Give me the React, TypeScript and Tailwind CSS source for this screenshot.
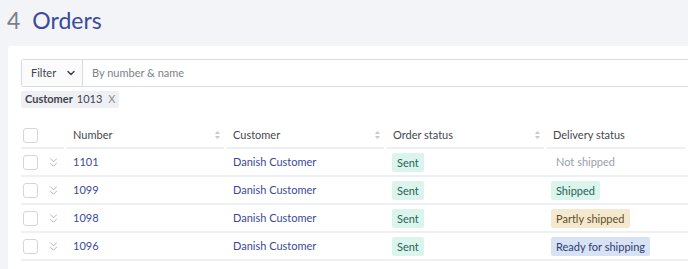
import React from 'react'
import { ChevronDown, ChevronsDown } from 'lucide-react'

interface Order {
  number: string
  customer: string
  orderStatus: string
  delivery: 'none' | 'shipped' | 'partly' | 'ready'
}

const orders: Order[] = [
  { number: '1101', customer: 'Danish Customer', orderStatus: 'Sent', delivery: 'none' },
  { number: '1099', customer: 'Danish Customer', orderStatus: 'Sent', delivery: 'shipped' },
  { number: '1098', customer: 'Danish Customer', orderStatus: 'Sent', delivery: 'partly' },
  { number: '1096', customer: 'Danish Customer', orderStatus: 'Sent', delivery: 'ready' }
]

const SortIcon = () => (
  <svg width="7" height="10" viewBox="0 0 7 10" className="shrink-0">
    <path d="M3.5 1 L6 4 H1 Z" fill="#c4c7cf" />
    <path d="M3.5 9 L6 6 H1 Z" fill="#c4c7cf" />
  </svg>
)

const Checkbox = () => (
  <div className="w-[15px] h-[15px] rounded-[3px] border border-[#d4d6dc] bg-white" />
)

const badge = 'px-[5px] py-[3px] leading-[13px] rounded-[2px]'

const DeliveryCell = ({ status }: { status: Order['delivery'] }) => {
  if (status === 'none') return <span className="px-[5px] text-[#9ba0aa]">Not shipped</span>
  if (status === 'shipped') return <span className={`${badge} bg-[#dcf5ec] text-[#27645a]`}>Shipped</span>
  if (status === 'partly') return <span className={`${badge} bg-[#f4e9cf] text-[#5e4d27]`}>Partly shipped</span>
  return <span className={`${badge} bg-[#d7e2f4] text-[#2f3d6e]`}>Ready for shipping</span>
}

const HeaderCell = ({ label, sortable = true }: { label: string; sortable?: boolean }) => (
  <div className="flex items-center justify-between pl-[6px] pr-[3px] mr-[3px] h-[26px] border-b-2 border-[#eceef2]">
    <span>{label}</span>
    {sortable && <SortIcon />}
  </div>
)

export default function App() {
  return (
    <div
      className="w-[688px] h-[269px] overflow-hidden bg-[#f3f4f8] text-[11px]"
      style={{ fontFamily: 'Lato, "Open Sans", sans-serif' }}
    >
      <div className="h-[46px] flex items-center pl-[7px] pb-[5px] text-[23px] leading-none">
        <span className="text-[#7b7f88]">4</span>
        <span className="ml-[12px] text-[#3b4a9c]">Orders</span>
      </div>

      <div className="ml-[8px] h-[223px] bg-white rounded-tl-[3px] pl-[13px] pt-[13px]">
        {/* filter bar */}
        <div className="flex h-[28px] border border-[#d9dbe0] border-r-0 rounded-l-[3px]">
          <button className="flex items-center w-[61px] pl-[9px] gap-[9px] bg-[#fbfbfc] border-r border-[#d9dbe0] text-[#3f434c]">
            Filter
            <ChevronDown className="w-[12px] h-[12px]" strokeWidth={3} />
          </button>
          <input
            className="flex-1 px-[9px] outline-none text-[#3f434c] placeholder:text-[#7d828b]"
            placeholder="By number & name"
          />
        </div>

        <div className="mt-[4px] inline-flex items-center gap-[4px] h-[17px] px-[4px] bg-[#eef0f4] rounded-[2px] text-[#3f434c]">
          <span className="font-bold">Customer</span>
          <span>1013</span>
          <span className="ml-[2px] text-[#8a8f98]">X</span>
        </div>

        {/* table */}
        <div className="mt-[15px] grid grid-cols-[46px_160px_160px_160px_1fr] text-[#44484f]">
          <div className="flex items-center pl-[2px] h-[26px] border-b-2 border-[#eceef2] mr-[3px]">
            <Checkbox />
          </div>
          <HeaderCell label="Number" />
          <HeaderCell label="Customer" />
          <HeaderCell label="Order status" />
          <HeaderCell label="Delivery status" sortable={false} />

          {orders.map((o) => (
            <React.Fragment key={o.number}>
              <div className="flex items-center gap-[8px] pl-[2px] h-[28px] border-b-2 border-[#eef0f3]">
                <Checkbox />
                <ChevronsDown className="w-[15px] h-[15px] text-[#a9adb6]" strokeWidth={1.4} />
              </div>
              <div className="flex items-center pl-[6px] h-[28px] border-b-2 border-[#eef0f3] text-[#3b4a9c]">
                {o.number}
              </div>
              <div className="flex items-center pl-[6px] h-[28px] border-b-2 border-[#eef0f3] text-[#3b4a9c]">
                {o.customer}
              </div>
              <div className="flex items-center pl-[5px] h-[28px] border-b-2 border-[#eef0f3]">
                <span className={`${badge} bg-[#dcf5ec] text-[#27645a]`}>{o.orderStatus}</span>
              </div>
              <div className="flex items-center pl-[4px] h-[28px] border-b-2 border-[#eef0f3]">
                <DeliveryCell status={o.delivery} />
              </div>
            </React.Fragment>
          ))}
        </div>
      </div>
    </div>
  )
}
